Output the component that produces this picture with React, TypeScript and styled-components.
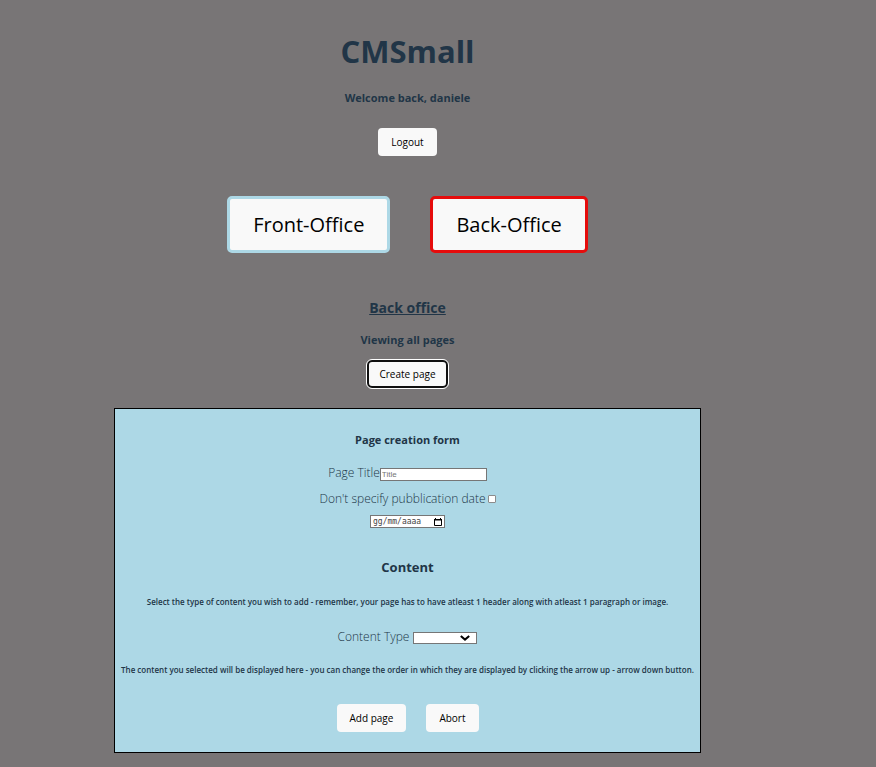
import React from "react";
import styled, { createGlobalStyle } from "styled-components";

const GlobalStyle = createGlobalStyle`
  *, *::before, *::after { box-sizing: border-box; }
  body {
    margin: 0;
    background: #787576;
    color: #213547;
    font-family: "Segoe UI", "Open Sans", "Noto Sans", sans-serif;
  }
  h1, h2, h3, h4, h5, p { margin: 0; }
`;

const Page = styled.main`
  display: flex;
  flex-direction: column;
  align-items: center;
  padding: 27px 61px 14px 0;
`;

const Title = styled.h1`
  font-size: 31px;
  line-height: 48px;
  font-weight: 700;
`;

const Subheading = styled.h4<{ $top: number }>`
  margin-top: ${({ $top }) => $top}px;
  font-size: 11px;
  line-height: 18px;
  font-weight: 700;
`;

const Button = styled.button`
  height: 28px;
  padding: 0 13px;
  border: 0;
  border-radius: 4px;
  background: #f9f9f9;
  color: #000;
  font-family: inherit;
  font-size: 10px;
  font-weight: 500;
  white-space: nowrap;
  cursor: pointer;
`;

const LogoutButton = styled(Button)`
  margin-top: 21px;
`;

const CreateButton = styled(Button)`
  margin-top: 11px;
  border: 2px solid #101010;
  padding: 0 10px;
  border-radius: 5px;
  outline: 1px solid #fff;
`;

const OfficeNav = styled.nav`
  display: flex;
  gap: 40px;
  margin-top: 40px;
`;

const OfficeButton = styled(Button)<{ $active?: boolean }>`
  height: 57px;
  padding: 0 23px;
  border: 3px solid ${({ $active }) => ($active ? "#e60c0c" : "#add8e6")};
  border-radius: 5px;
  font-size: 20px;
`;

const SectionTitle = styled.h2`
  margin-top: 43px;
  font-size: 14px;
  line-height: 24px;
  font-weight: 700;
  text-decoration: underline;
`;

const Form = styled.form`
  display: flex;
  flex-direction: column;
  align-items: center;
  margin-top: 20px;
  padding: 22px 6px 20px;
  border: 1px solid #000;
  background: #add8e6;
`;

const FormTitle = styled.h4`
  font-size: 11px;
  line-height: 18px;
  font-weight: 700;
`;

const Field = styled.div<{ $top: number; $gap?: number }>`
  display: flex;
  align-items: center;
  gap: ${({ $gap = 0 }) => $gap}px;
  margin-top: ${({ $top }) => $top}px;
  font-size: 12px;
  line-height: 18px;
  font-weight: 300;
`;

const TextInput = styled.input`
  width: 107px;
  height: 13px;
  margin-top: 2px;
  padding: 0 1px;
  border: 1px solid #767676;
  border-radius: 0;
  background: #fff;
  font: 8px "Liberation Sans", Arial, sans-serif;
  &::placeholder { color: #757575; opacity: 1; }
`;

const Checkbox = styled.input`
  appearance: none;
  width: 8px;
  height: 8px;
  margin: 0;
  border: 1px solid #8c8c8c;
  border-radius: 1px;
  background: #fff;
  &:checked { background: #0075ff; }
`;

const DateBox = styled.div`
  display: flex;
  align-items: center;
  width: 75px;
  height: 13px;
  margin-top: 7px;
  padding: 0 2px 0 1px;
  border: 1px solid #767676;
  background: #fff;
`;

const DateInput = styled.input`
  flex: 1;
  min-width: 0;
  height: 11px;
  padding: 0 1px;
  border: 0;
  outline: 0;
  background: transparent;
  font: 8px "DejaVu Sans Mono", "Liberation Mono", monospace;
  &::placeholder { color: #444; opacity: 1; }
`;

const CalendarButton = styled.button`
  display: flex;
  padding: 0;
  border: 0;
  background: transparent;
`;

const ContentTitle = styled.h3`
  margin-top: 28px;
  font-size: 13px;
  line-height: 22px;
  font-weight: 700;
`;

const Hint = styled.h5<{ $top: number }>`
  margin-top: ${({ $top }) => $top}px;
  font-size: 8px;
  line-height: 12px;
  font-weight: 600;
  text-align: center;
`;

const SelectBox = styled.div`
  display: grid;
  align-items: center;
  width: 64px;
  height: 12px;
  margin-top: 2px;
  > * { grid-area: 1 / 1; }
  > svg { justify-self: end; margin-right: 7px; pointer-events: none; }
`;

const Select = styled.select`
  appearance: none;
  width: 100%;
  height: 12px;
  padding: 0 2px;
  border: 1px solid #767676;
  border-radius: 0;
  background: #fff;
  font: 8px "Liberation Sans", Arial, sans-serif;
`;

const Actions = styled.div`
  display: flex;
  gap: 20px;
  margin-top: 28px;
`;

const CalendarIcon = () => (
  <svg width="8" height="8" viewBox="0 0 8 8" aria-hidden="true">
    <path d="M.5 1.5h7v6h-7z" fill="none" stroke="#000" />
    <path d="M0 1h1V0h1v1h4V0h1v1h1v1.5H0z" />
  </svg>
);

const ChevronIcon = () => (
  <svg width="10" height="6" viewBox="0 0 10 6" aria-hidden="true">
    <path d="M.8 1 5 4.6 9.2 1" fill="none" stroke="#000" strokeWidth="2" />
  </svg>
);

export default function App() {
  return (
    <>
      <GlobalStyle />
      <Page>
        <Title>CMSmall</Title>
        <Subheading $top={14}>Welcome back, daniele</Subheading>
        <LogoutButton type="button">Logout</LogoutButton>
        <OfficeNav>
          <OfficeButton type="button">Front-Office</OfficeButton>
          <OfficeButton type="button" $active>Back-Office</OfficeButton>
        </OfficeNav>
        <SectionTitle>Back office</SectionTitle>
        <Subheading $top={11}>Viewing all pages</Subheading>
        <CreateButton type="button">Create page</CreateButton>
        <Form onSubmit={(e) => e.preventDefault()}>
          <FormTitle>Page creation form</FormTitle>
          <Field $top={15}>
            <label htmlFor="title">Page Title</label>
            <TextInput id="title" type="text" placeholder="Title" />
          </Field>
          <Field $top={8} $gap={2}>
            <label htmlFor="no-date">Don't specify pubblication date</label>
            <Checkbox id="no-date" type="checkbox" />
          </Field>
          <DateBox>
            <DateInput type="text" aria-label="Publication date" placeholder="gg/mm/aaaa" />
            <CalendarButton type="button" aria-label="Open calendar">
              <CalendarIcon />
            </CalendarButton>
          </DateBox>
          <ContentTitle>Content</ContentTitle>
          <Hint $top={18}>
            Select the type of content you wish to add - remember, your page has to have atleast 1 header along with atleast 1 paragraph or image.
          </Hint>
          <Field $top={20} $gap={4}>
            <label htmlFor="content-type">Content Type</label>
            <SelectBox>
              <Select id="content-type" defaultValue="">
                <option value="" />
                <option value="header">Header</option>
                <option value="paragraph">Paragraph</option>
                <option value="image">Image</option>
              </Select>
              <ChevronIcon />
            </SelectBox>
          </Field>
          <Hint $top={18}>
            The content you selected will be displayed here - you can change the order in which they are displayed by clicking the arrow up - arrow down button.
          </Hint>
          <Actions>
            <Button type="submit">Add page</Button>
            <Button type="button">Abort</Button>
          </Actions>
        </Form>
      </Page>
    </>
  );
}
